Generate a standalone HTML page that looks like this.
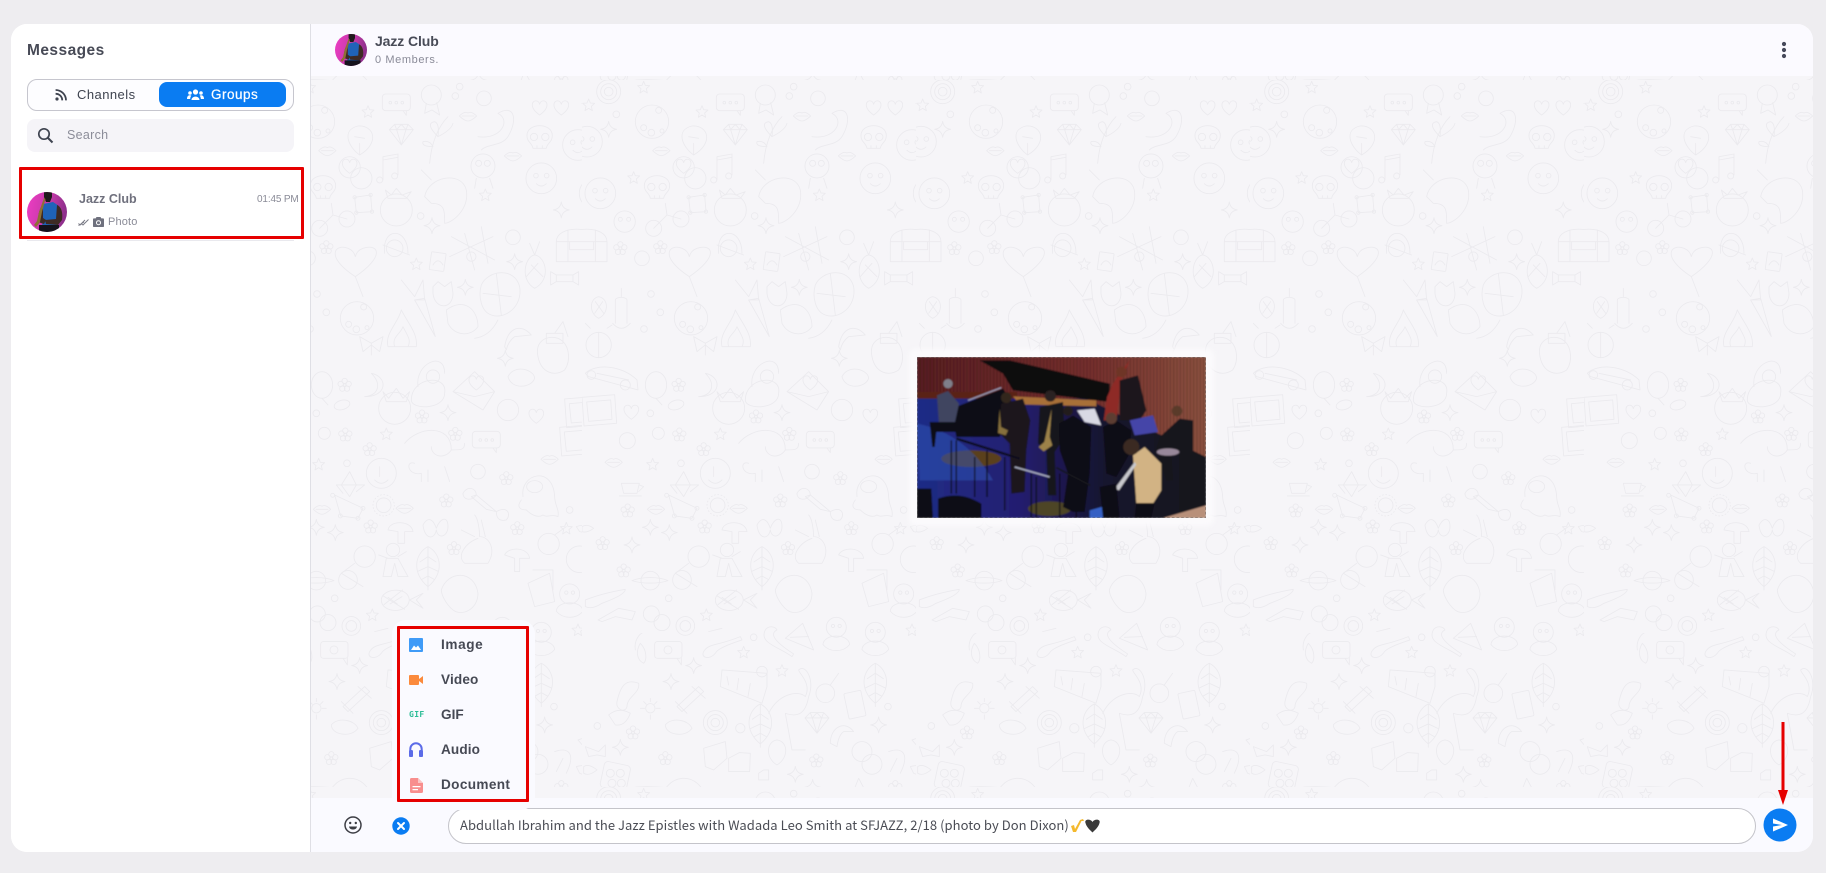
<!DOCTYPE html>
<html lang="en"><head><meta charset="utf-8"><title>Messages</title>
<style>
html,body{margin:0;padding:0;width:1826px;height:873px;overflow:hidden;background:#eeedf0;font-family:"Liberation Sans","Noto Sans CJK JP",sans-serif;color:#3f4450}
.a{position:absolute;white-space:nowrap}
svg{display:block}
.t{line-height:20px;height:20px}
</style></head><body>
<div class="a" style="left:11px;top:24px;width:1802px;height:828px;border-radius:16px;overflow:hidden;background:#fff"></div>
<div class="a" style="left:11px;top:24px;width:299px;height:828px;background:#fff;border-radius:16px 0 0 16px"></div>
<div class="a" style="left:310px;top:24px;width:1px;height:828px;background:#dfdfe5"></div>

<!-- chat wallpaper -->
<div class="a" style="left:311px;top:24px;width:1502px;height:828px;border-radius:0 16px 16px 0;overflow:hidden;background:#f6f5f8">
<svg width="1502" height="828" viewBox="311 24 1502 828" style="position:absolute;left:0;top:0">
<defs>
<g id="s"><path d="M0-18 5-6 18-5 8 4 11 17 0 10-11 17-8 4-18-5-5-6Z"/></g>
<g id="k"><path d="M0-24Q3-3 24 0Q3 3 0 24Q-3 3-24 0Q-3-3 0-24Z"/></g>
<g id="h"><path d="M0 20C-34-4-22-26-8-22Q-2-20 0-12Q2-20 8-22C22-26 34-4 0 20Z"/></g>
<g id="f"><circle cx="0" cy="-12" r="8"/><circle cx="12" cy="-3" r="8"/><circle cx="7" cy="11" r="8"/><circle cx="-7" cy="11" r="8"/><circle cx="-12" cy="-3" r="8"/><circle r="4"/></g>
<g id="l"><path d="M-26 0Q-10-16 0-9Q10-16 26 0Q10 15 0 15Q-10 15-26 0ZM-18 0H18"/></g>
<g id="m"><circle r="50"/><circle cx="-25" cy="18" r="9"/><circle cx="-2" cy="33" r="10"/><circle cx="20" cy="-34" r="9"/><circle cx="30" cy="28" r="6"/></g>
<g id="d"><circle r="36"/><circle r="13"/><circle r="24"/></g>
<g id="b"><rect x="-42" y="-26" width="84" height="50" rx="10"/><circle cx="-18" r="4"/><circle r="4"/><circle cx="18" r="4"/><path d="M20 24 30 38V24"/></g>
<g id="fc"><circle r="46"/><circle cx="-16" cy="-8" r="7"/><circle cx="16" cy="-8" r="7"/><path d="M-15 16Q0 30 15 16"/></g>
<g id="sk"><path d="M-38-8C-38-48 38-48 38-8 38 12 22 14 20 30H-20C-22 14-38 12-38-8Z"/><circle cx="-17" cy="-4" r="11"/><circle cx="17" cy="-4" r="11"/><path d="M-8 30V22M8 30V22"/></g>
<g id="di"><path d="M-36-16-20-32H20L36-16 0 30ZM-36-16H36M-14-16 0 30 14-16M-20-32-14-16 0-32 14-16 20-32"/></g>
<g id="lf"><path d="M0 60C-50 20-40-40 0-60C40-40 50 20 0 60ZM0-60V70M0-30-24-14M0-30 24-14M0 0-30 14M0 0 30 14M0 28-18 38M0 28 18 38"/></g>
<g id="ch"><path d="M-60-10C-60-60 60-60 60-10V50H-60ZM-60-10H60M-20-10V14H20V-10M-25-45V50M25-45V50"/></g>
<g id="st"><path d="M-170 20C-120-8 110 30 170 58 100 50-120 30-170 20Z"/><path d="M-62 62C-62-30 60-50 74 60"/><path d="M-62 40Q10 30 74 50"/></g>
<g id="c"><circle r="22"/></g>
<g id="c2"><circle r="10"/></g>
<g id="o"><path d="M-40 0C-40-34 40-44 44 0 40 44-40 40-40 0ZM-20-8 8 12M-14 12 22-10M-34 -12 30 28M-32 14 24-30"/></g>
<g id="bd"><circle cx="0" cy="-18" r="30"/><path d="M-40 34C-38 0 38 0 40 34 20 58-20 58-40 34Z"/><circle cx="-10" cy="-22" r="5"/><circle cx="10" cy="-22" r="5"/></g>
<g id="fr"><path d="M-50-38 48-46 54 40-44 48Z"/><path d="M-36-24 36-30 40 28-30 34Z"/></g>
</defs>
<pattern id="wp" x="1250" y="80" width="334" height="707" patternUnits="userSpaceOnUse">
<g transform="scale(.3333)" fill="none" stroke="#ebeaee" stroke-width="2.6" stroke-linejoin="round" stroke-linecap="round">
<use href="#d" x="80" y="35"/><use href="#m" x="210" y="125"/><use href="#b" x="445" y="68"/>
<use href="#s" x="185" y="22"/><use href="#s" x="20" y="75"/><use href="#s" x="360" y="95"/><use href="#s" x="1020" y="75"/><use href="#s" x="155" y="293"/><use href="#s" x="712" y="345"/><use href="#s" x="505" y="552"/>
<use href="#k" x="80" y="148"/><use href="#k" x="940" y="390"/><use href="#k" x="552" y="437"/><use href="#k" x="800" y="545"/><use href="#k" x="652" y="622"/><use href="#k" x="772" y="835"/><use href="#k" x="600" y="998"/>
<use href="#c" x="708" y="55"/><use href="#c2" x="635" y="20"/><use href="#c2" x="622" y="48"/><use href="#c2" x="103" y="103"/><use href="#c" x="795" y="472"/><use href="#c" x="180" y="535"/><use href="#c2" x="518" y="408"/><use href="#c2" x="207" y="642"/><use href="#c2" x="186" y="747"/><use href="#c2" x="235" y="697"/><use href="#c2" x="205" y="1000"/>
<circle cx="550" cy="45" r="30"/><path d="M535 70 530 100 552 90 575 105 566 68"/>
<use href="#h" x="875" y="85"/><use href="#h" x="940" y="85"/>
<use href="#fc" x="990" y="195"/><use href="#fc" x="15" y="185"/>
<use href="#sk" x="875" y="175"/><use href="#sk" x="225" y="325"/>
<path d="M335 225C300 200 280 150 330 138 380 135 395 190 335 225ZM335 225V190M320 170 350 175"/>
<use href="#di" x="460" y="165"/>
<path d="M545 250C550 190 570 140 600 110M570 170Q530 130 560 125 575 130 570 170ZM570 170Q610 150 615 130M555 200Q520 200 525 185 545 180 555 200Z"/>
<use href="#l" x="238" y="212"/><use href="#l" x="795" y="228"/><use href="#l" x="660" y="108"/>
<path d="M690 170C760 180 790 120 750 100 800 70 810 120 780 170 760 200 720 190 700 210"/>
<circle cx="705" cy="258" r="36"/><circle cx="692" cy="250" r="9"/><circle cx="718" cy="250" r="9"/><path d="M685 295 680 325M725 295 735 325"/>
<use href="#fc" x="880" y="295"/>
<use href="#fc" x="55" y="340"/><use href="#fc" x="1040" y="340"/>
<circle cx="305" cy="262" r="32"/><circle cx="340" cy="295" r="32"/><use href="#h" x="305" y="260"/><path d="M405 300V230L450 222V285M405 240 450 232"/><circle cx="395" cy="300" r="9"/><circle cx="440" cy="288" r="9"/>
<path d="M520 270 550 300M530 350C540 290 640 270 655 330 665 390 610 430 590 430 590 390 590 370 550 370Z"/>
<circle cx="445" cy="390" r="48"/><path d="M412 330 430 345 445 325 462 345 490 335 475 355H420Z"/>
<path d="M320 352 368 345 372 395 325 398Z"/><circle cx="320" cy="352" r="5"/><circle cx="368" cy="345" r="5"/><circle cx="372" cy="395" r="5"/><circle cx="325" cy="398" r="5"/>
<circle cx="215" cy="445" r="24"/><circle cx="297" cy="417" r="24"/><path d="M215 445 255 405 297 417M255 405 250 370"/>
<circle cx="128" cy="425" r="32"/><circle cx="115" cy="418" r="6"/><circle cx="140" cy="418" r="6"/>
<use href="#ch" x="985" y="495"/><use href="#ch" x="15" y="495"/>
<path d="M610 470 740 540M605 530 735 470M650 460 680 570M700 440 720 550"/><circle cx="670" cy="530" r="14"/>
<path d="M860 625C815 600 830 530 860 525 895 530 910 600 860 625ZM860 525 845 490M860 525 875 485M850 555 885 590M870 550 835 590"/>
<path d="M925 585H975V605H925ZM925 585 908 575V615L925 605M975 585 992 575V615L975 605"/>
<path d="M322 590C230 530 260 490 300 505Q318 512 322 530 326 512 345 505C395 490 410 530 322 590ZM322 590 345 650"/>
<path d="M410 520C400 440 480 440 480 520M405 495 485 525"/><circle cx="440" cy="505" r="25"/>
<rect x="547" y="518" width="44" height="54" rx="3" transform="rotate(8 570 545)"/><path d="M555 555Q570 530 585 555"/>
<use href="#f" x="115" y="505"/><use href="#f" x="235" y="502"/><use href="#f" x="522" y="1010"/><use href="#f" x="290" y="915"/>
<path d="M700 615C720 570 800 560 815 620 825 680 770 720 730 705 700 695 690 650 700 615ZM745 580 760 705M705 640 790 650"/>
<path d="M555 620 570 605 590 620 610 605 615 640C615 690 560 690 555 640ZM595 690C650 650 690 690 690 740 670 770 620 770 600 730ZM680 775C720 770 740 740 750 720"/>
<path d="M460 600 500 650 525 600 530 660 500 660"/><path d="M500 660 530 655 562 770Z"/>
<path d="M100 730V660C100 650 135 650 135 660V730M118 650V625M92 730Q118 760 145 730"/>
<path d="M50 715C20 700 22 655 50 650 80 655 82 700 50 715ZM40 665 65 700M62 665 38 700"/>
<use href="#m" x="327" y="715" transform="translate(0 0)"/>
<path d="M420 800C410 760 450 730 460 690 480 730 510 760 505 800ZM440 800C430 770 460 760 465 740 480 770 490 780 480 800"/>
<path d="M770 800C780 740 820 730 850 765L800 770Q780 785 775 810Z"/>
<circle cx="50" cy="795" r="38"/><path d="M50 757V833M25 745 10 730M75 745 90 735"/>
<path d="M870 830C860 780 900 765 930 775 965 790 970 840 950 870 920 890 880 880 870 830ZM895 760H945V790H895ZM920 760 945 725 960 770"/>
<path d="M370 790 335 770 345 815 370 795 395 815 405 770ZM370 790V825"/>
<path d="M10 880C40 850 120 855 165 900L168 930 20 890ZM45 880 140 900"/><circle cx="130" cy="915" r="15"/><circle cx="28" cy="885" r="13"/>
<ellipse cx="222" cy="915" rx="32" ry="40"/><path d="M222 955 240 975"/><ellipse cx="282" cy="975" rx="24" ry="14" transform="rotate(-15 282 975)"/>
<path d="M370 880C420 890 420 950 350 950 395 945 400 910 370 880Z"/>
<path d="M490 960C490 890 600 880 590 940 590 990 490 990 490 960ZM510 920C500 850 590 810 590 880"/><circle cx="555" cy="890" r="20"/>
<path d="M615 935 680 875 740 935 705 990ZM615 935 680 950 740 935"/><use href="#h" x="685" y="910"/>
<path d="M780 890C800 850 860 870 860 895 850 925 790 930 780 890Z"/>
<circle cx="440" cy="985" r="48"/><path d="M405 935 422 955 445 925 465 955 485 935 475 965H415Z"/>
<use href="#fr" x="50" y="990"/><use href="#fr" x="1000" y="995"/>
<circle cx="780" cy="990" r="32"/><use href="#h" x="148" y="998"/><use href="#h" x="865" y="1010"/>
<!-- lower half -->
<g transform="translate(0 1050)">
<circle cx="136" cy="32" r="24"/><circle cx="229" cy="10" r="18"/><use href="#f" x="292" y="14"/><use href="#s" x="415" y="12"/><use href="#f" x="622" y="12"/>
<use href="#b" x="715" y="30"/><use href="#fr" x="985" y="30"/><use href="#f" x="365" y="58"/>
<path d="M470 40C510 -10 610-20 610 60 640 60 650 60 650 40M500 100C470 90 480 140 520 130V155M540 120V155M590 110 605 155M550 50C550 80 590 90 610 60"/>
<use href="#l" x="95" y="97"/><use href="#s" x="212" y="103"/><circle cx="400" cy="130" r="45"/><path d="M380 150Q400 170 420 150M395 110V140"/>
<path d="M305 200 280 165 305 125 325 165ZM305 165 350 165 325 185M305 165 265 165 285 190"/>
<path d="M118 160H172L165 190H125ZM112 198H178M172 165 185 170 170 185"/>
<use href="#c" x="690" y="125"/><use href="#f" x="775" y="145"/>
<path d="M825 200C815 130 915 105 920 200 920 225 935 240 930 260 910 250 900 265 885 255 870 265 850 255 835 240 815 240 805 230 820 210"/><ellipse cx="860" cy="170" rx="24" ry="18"/>
<path d="M685 195 745 245 715 238 670 200ZM645 190C660 165 685 175 685 195 670 215 645 210 645 190ZM745 245C780 225 790 255 775 270 755 275 745 265 745 245Z"/>
<use href="#f" x="137" y="242"/><use href="#f" x="595" y="212"/><use href="#f" x="368" y="290"/><use href="#f" x="62" y="340"/><use href="#f" x="125" y="422"/><use href="#f" x="618" y="355"/><use href="#f" x="808" y="295"/><use href="#f" x="153" y="908"/><use href="#f" x="250" y="985"/><use href="#f" x="703" y="992"/><use href="#f" x="940" y="1072"/>
<path d="M260 195 345 235 330 265 278 258Z"/><circle cx="254" cy="196" r="6"/><circle cx="345" cy="235" r="6"/><circle cx="277" cy="258" r="6"/><circle cx="330" cy="265" r="6"/>
<circle cx="407" cy="226" r="22"/><circle cx="407" cy="226" r="32" stroke-dasharray="3 7"/><use href="#l" x="222" y="238"/><use href="#l" x="470" y="235"/><use href="#l" x="905" y="88"/>
<use href="#k" x="205" y="292"/><use href="#k" x="262" y="308"/><use href="#k" x="150" y="345"/><use href="#k" x="335" y="707"/><use href="#k" x="267" y="755"/><use href="#k" x="890" y="885"/><use href="#k" x="640" y="1033"/><use href="#k" x="692" y="1072"/><use href="#k" x="115" y="952"/>
<circle cx="902" cy="342" r="32"/><path d="M920 315 955 290"/><use href="#s" x="955" y="295"/>
<path d="M420 300C425 270 490 270 495 305H470V340H450V305ZM770 375C780 350 840 350 845 385H815V425H800V385Z"/>
<path d="M525 285C545 250 560 280 565 295 575 265 600 255 600 290 600 320 570 330 565 300 560 330 530 330 525 285Z"/>
<path d="M640 300 680 320M680 255C690 265 695 300 695 320 725 320 745 360 720 400H650C625 380 650 340 690 325M700 270 712 320"/>
<path d="M420 385 392 375M450 380 475 365M415 385 405 440H430L440 400 450 440H480L450 385Z"/><circle cx="435" cy="360" r="20"/>
<use href="#lf" x="540" y="410"/>
<path d="M150 452C180 440 230 440 258 452 230 462 180 462 150 452Z"/><circle cx="205" cy="452" r="28"/>
<circle cx="350" cy="380" r="32"/><circle cx="300" cy="450" r="28"/><path d="M320 400 280 430 345 470"/>
<circle cx="995" cy="388" r="40"/><path d="M10 510Q60 490 130 478 130 495 60 520 30 540 10 530ZM48 570 110 535 160 545 150 570 100 560 60 575Z"/>
<use href="#o" x="440" y="510"/><path d="M485 510 525 490 505 510 525 535Z"/>
<path d="M580 480C600 420 680 420 690 490 690 540 640 560 615 540 590 520 580 490 580 480Z"/>
<path d="M840 460 905 430 920 515 860 530Z"/><path d="M855 420H915V480"/>
<circle cx="208" cy="552" r="24"/><circle cx="240" cy="578" r="24"/>
<circle cx="310" cy="588" r="28"/><circle cx="310" cy="588" r="16"/><path d="M380 605 420 595"/><use href="#s" x="373" y="555"/>
<path d="M160 660C155 630 175 610 180 610M175 640C195 660 195 690 185 700 165 690 160 665 175 640Z"/>
<rect x="218" y="635" width="82" height="50" rx="8"/><path d="M285 685 298 705V685"/><circle cx="258" cy="660" r="12"/>
<path d="M365 665C380 640 400 650 475 620L480 630C420 650 405 660 400 670 385 690 355 685 365 665Z"/>
<path d="M630 680C590 650 530 640 550 600 560 585 580 590 585 600 565 610 570 630 635 672Z"/>
<path d="M610 625 662 580 695 660ZM625 622 680 620"/>
<use href="#bd" x="763" y="610"/><use href="#bd" x="880" y="625"/>
<use href="#s" x="485" y="667"/><use href="#s" x="600" y="722"/><use href="#s" x="990" y="600"/>
<path d="M420 720 415 770 540 820 555 770 555 730ZM435 740 440 765M470 745 465 780M505 760 498 800"/><circle cx="540" cy="725" r="16"/>
<path d="M560 850C590 790 650 780 670 800 690 760 650 730 650 720 670 700 700 750 680 800 670 860 640 860 610 850L630 960H670"/>
<circle cx="730" cy="790" r="28"/><path d="M745 765 770 730"/>
<rect x="793" y="785" width="52" height="78" rx="4" transform="rotate(-12 820 825)"/>
<use href="#di" x="705" y="880"/><path d="M745 940C745 890 790 870 815 905L785 905Q770 915 765 950Z"/>
<path d="M285 830 350 770 365 785 300 845ZM280 815 315 850M330 770 370 805"/><path d="M105 815C115 770 130 745 170 760 175 790 135 800 135 830 130 850 100 840 105 815Z"/>
<circle cx="205" cy="835" r="14"/><path d="M205 805V815M205 855V868M175 835H188M222 835H235M185 815 193 823M225 815 217 823"/>
<use href="#d" x="400" y="878"/><path d="M80 855Q110 830 145 850 130 890 100 885ZM250 885C270 860 320 870 330 895 310 925 250 915 250 885Z"/>
<use href="#lf" x="535" y="882"/><use href="#lf" x="880" y="760"/><circle cx="475" cy="895" r="14"/>
<path d="M585 1005C550 985 552 935 585 930 620 935 620 985 585 1005Z"/><path d="M472 968 505 970 503 1025H440V985Z"/>
<circle cx="840" cy="965" r="30"/><circle cx="870" cy="1003" r="30"/><path d="M920 965C960 950 985 970 955 1030M945 985 925 1025"/>
<path d="M365 955 430 935 435 985 395 1020 370 1010Z"/>
<rect x="60" y="1000" width="80" height="80" rx="12" transform="rotate(12 100 1040)"/><circle cx="85" cy="1030" r="12"/><circle cx="115" cy="1030" r="12"/><circle cx="90" cy="1060" r="12"/><circle cx="118" cy="1060" r="12"/>
<use href="#st" x="300" y="1060"/>
<path d="M545 1020H560V1050H530V1030Z"/><path d="M550 1095V1085C555 1070 590 1070 592 1090V1100"/>
<path d="M830 1045 846 1075 880 1080 855 1100H805L785 1078 818 1075Z"/>
<path d="M5 1010Q20 1000 45 1020 20 1040 5 1030ZM985 1010Q1015 1000 1040 1020 1015 1040 995 1030ZM985 290Q1015 280 1035 295 1015 310 995 305ZM0 290Q15 280 35 295 15 310 0 305Z"/>
<use href="#bd" x="965" y="510"/><path d="M10 950 50 965 70 945 70 980 45 975 20 980ZM990 930 1020 920 1050 945 1020 965Z"/>
<use href="#c2" x="965" y="240"/><use href="#c2" x="260" y="505"/><use href="#c2" x="515" y="622"/><use href="#c2" x="46" y="888"/><use href="#c2" x="918" y="830"/><use href="#c2" x="297" y="100"/>
</g>
</g>
</pattern>
<rect x="311" y="76" width="1502" height="722" fill="url(#wp)"/>
</svg>
</div>

<!-- header -->
<div class="a" style="left:311px;top:24px;width:1502px;height:52px;background:#fbfaff;border-radius:0 16px 0 0"></div>
<svg class="a" width="32" height="32" viewBox="0 0 40 40" style="left:335px;top:34px"><use href="#av"/></svg>
<div class="a t" style="left:375px;top:31px;font-size:14px;font-weight:700;color:#484b57;letter-spacing:-.1px">Jazz Club</div>
<div class="a t" style="left:375px;top:50px;font-size:11px;color:#8a8b98;letter-spacing:.6px">0 Members.</div>
<svg class="a" width="8" height="20" style="left:1780px;top:40px"><g fill="#46495a"><circle cx="4" cy="4" r="2.1"/><circle cx="4" cy="10" r="2.1"/><circle cx="4" cy="16" r="2.1"/></g></svg>

<!-- sidebar -->
<div class="a t" style="left:27px;top:41px;font-size:15.5px;font-weight:700;color:#474a56;letter-spacing:.45px">Messages</div>
<div class="a" style="left:27px;top:79px;width:265px;height:30px;border:1px solid #c6c6ce;border-radius:10px;background:#fdfdff"></div>
<div class="a" style="left:159px;top:82px;width:127px;height:25px;background:#0a7cf2;border-radius:8px"></div>
<svg class="a" width="12" height="12" viewBox="0 0 12 12" style="left:55px;top:89px"><circle cx="2" cy="10" r="1.6" fill="#3f4450"/><path d="M.6 4.8A6.4 6.4 0 0 1 7.2 11.4M.6 1A10.4 10.4 0 0 1 11 11.4" fill="none" stroke="#3f4450" stroke-width="1.8"/></svg>
<div class="a t" style="left:77px;top:85px;font-size:13px;color:#3f4450;letter-spacing:.45px">Channels</div>
<svg class="a" width="17" height="12" viewBox="0 0 17 12" style="left:187px;top:89px" fill="#fff"><circle cx="8.5" cy="3" r="2.6"/><circle cx="3" cy="4" r="1.8"/><circle cx="14" cy="4" r="1.8"/><path d="M4.5 11C4.5 6.5 12.5 6.5 12.5 11ZM0 10C0 6 3 6 4.3 6.6 3.4 7.6 3.2 9 3.2 10ZM17 10C17 6 14 6 12.7 6.6 13.6 7.6 13.8 9 13.8 10Z"/></svg>
<div class="a t" style="left:211px;top:85px;font-size:13.5px;color:#fff;letter-spacing:.5px;-webkit-text-stroke:.2px #fff">Groups</div>
<div class="a" style="left:27px;top:119px;width:267px;height:33px;background:#f5f4f8;border-radius:8px"></div>
<svg class="a" width="18" height="18" style="left:37px;top:127px"><circle cx="7" cy="7" r="5.2" fill="none" stroke="#3f4450" stroke-width="1.7"/><path d="M11 11 15.5 15.5" stroke="#3f4450" stroke-width="2"/></svg>
<div class="a t" style="left:67px;top:125px;font-size:12.5px;color:#8c8d99;letter-spacing:.3px">Search</div>

<div class="a" style="left:27px;top:240px;width:267px;height:1px;background:#e9e9ee"></div>
<svg class="a" width="40" height="40" viewBox="0 0 40 40" style="left:27px;top:192px"><defs><g id="av"><clipPath id="avc"><circle cx="20" cy="20" r="20"/></clipPath><linearGradient id="avg" x1="0" y1="0" x2="1" y2=".2"><stop offset="0" stop-color="#ee3cc4"/><stop offset=".6" stop-color="#c43aa8"/><stop offset="1" stop-color="#8f2f8c"/></linearGradient><g clip-path="url(#avc)"><rect width="40" height="40" fill="url(#avg)"/><path d="M16 12 26 10 32 14 32 28 29 35H15L16 24Z" fill="#1f63b8"/><path d="M17-1H25V5L23 10H19L17 5Z" fill="#201a1c"/><path d="M30 13C35 15 36 22 35 28L31 33 19 32 18 28 29 27Z" fill="#3d2a24"/><path d="M16 12C12 17 11 24 11 30L17 32 19 28 16 26Z" fill="#3d2a24"/><path d="M17 6 18.5 7 15 20 13 30 9 35 7 33 10 29 12 20Z" fill="#8d7034"/><path d="M12 33H32V40H12Z" fill="#15131c"/></g></g></defs><use href="#av"/></svg>
<div class="a t" style="left:79px;top:189px;font-size:12.5px;font-weight:700;color:#6f707d;letter-spacing:0">Jazz Club</div>
<div class="a t" style="left:257px;top:190px;font-size:10px;color:#8a8b97;letter-spacing:-.15px">01:45 PM</div>
<svg class="a" width="11" height="8" style="left:78px;top:218px"><path d="M.5 5.5 2 7 7 2M3.5 6 5 7 10.5 1.5M.5 7.5 6 4" fill="none" stroke="#777884" stroke-width="1"/></svg>
<svg class="a" width="11" height="10" viewBox="0 0 11 10" style="left:93px;top:217px"><path d="M3.5 0H7.5L8.3 1.4H10.2A.8.8 0 0 1 11 2.2V9.2A.8.8 0 0 1 10.2 10H.8A.8.8 0 0 1 0 9.2V2.2A.8.8 0 0 1 .8 1.4H2.7Z" fill="#6f717e"/><circle cx="5.5" cy="5.7" r="2" fill="none" stroke="#fff" stroke-width="1"/></svg>
<div class="a t" style="left:108px;top:212px;font-size:11px;color:#8a8b97;letter-spacing:.15px">Photo</div>
<div class="a" style="left:19px;top:167px;width:279px;height:66px;border:3px solid #e60000;border-radius:1px"></div>

<!-- center image -->
<div class="a" style="left:909px;top:349px;width:305px;height:177px;background:#fbfafc;border-radius:6px;filter:blur(3px)"></div>
<svg class="a" width="289" height="161" viewBox="52 50 867 483" preserveAspectRatio="none" style="left:917px;top:357px">
<defs><linearGradient id="fl" x1="0" y1="0" x2="1" y2="0"><stop offset="0" stop-color="#1e2c86"/><stop offset=".35" stop-color="#241e70"/><stop offset=".65" stop-color="#15122e"/><stop offset="1" stop-color="#17121a"/></linearGradient>
<linearGradient id="wl" x1="0" y1="0" x2="1" y2="0"><stop offset="0" stop-color="#5a1e22"/><stop offset=".6" stop-color="#78302e"/><stop offset="1" stop-color="#8e5240"/></linearGradient>
<pattern id="ws" width="10" height="20" patternUnits="userSpaceOnUse"><rect width="4" height="20" fill="#000" opacity=".2"/></pattern><filter id="bl"><feGaussianBlur stdDeviation="2.6"/></filter></defs>
<g filter="url(#bl)">
<rect x="52" y="50" width="867" height="483" fill="url(#wl)"/><rect x="52" y="50" width="867" height="300" fill="url(#ws)"/>
<rect x="52" y="155" width="300" height="30" fill="#5a2018"/>
<path d="M52 175H560L919 350V533H52Z" fill="url(#fl)"/>
<ellipse cx="215" cy="355" rx="90" ry="25" fill="#5a3f1e"/><ellipse cx="450" cy="505" rx="65" ry="22" fill="#4e4428"/>
<path d="M52 250Q200 280 280 420L60 420Z" fill="#2f55b8" opacity=".5"/>
<path d="M570 510 640 490 640 533H570ZM860 522 919 510V533H860Z" fill="#3560c4"/>
<path d="M790 533 919 495V533Z" fill="#b8907a"/>
<path d="M240 60H330L630 130V185L340 150 310 100Z" fill="#0c0a10"/>
<path d="M340 168 590 180 590 198 360 192Z" fill="#a87038"/>
<path d="M155 205 310 145 340 190 300 290H170Z" fill="#0d0c14"/>
<path d="M205 180 305 142" stroke="#9a9db8" stroke-width="4"/>
<path d="M112 165 145 152 178 190 165 250H118Z" fill="#3f4560"/><circle cx="145" cy="130" r="14" fill="#7f7f8a"/>
<path d="M90 245H170V275H110L105 320H98Z" fill="#0c0b12"/>
<path d="M305 190 370 175 392 240 380 330 375 455 335 460 330 310 300 280Z" fill="#1a171b"/><circle cx="320" cy="172" r="16" fill="#33261f"/>
<path d="M300 205 304 260 325 270 318 285 295 278Z" fill="#86703c"/>
<path d="M420 200 490 185 495 290 465 335 470 465 445 465 440 330 415 310Z" fill="#14131a"/><circle cx="452" cy="167" r="17" fill="#2c2220"/>
<path d="M456 205 450 290 458 315 432 333 417 320 434 305Z" fill="#9c824a"/>
<path d="M478 250 520 225 575 260 570 400 555 515 520 515 490 500 505 400 480 330Z" fill="#0f0e13"/><circle cx="505" cy="212" r="15" fill="#241b1a"/>
<path d="M532 210 585 205 605 255 555 245Z" fill="#d8d9e4"/>
<path d="M640 130 660 100 690 60 665 120 650 240H612L622 170Z" fill="#8e2c28"/>
<path d="M660 120 715 105 740 210 720 240H660Z" fill="#1a181c"/><circle cx="665" cy="95" r="16" fill="#6e3626"/>
<path d="M610 260 650 240 695 270 690 340 650 410 620 400Z" fill="#111017"/><circle cx="635" cy="234" r="17" fill="#5c3c32"/>
<path d="M690 240 760 225 775 275 705 285Z" fill="#4445a8"/>
<path d="M780 290 840 235 880 240 880 330 815 345 820 420H800L770 325Z" fill="#15141a"/><circle cx="832" cy="212" r="16" fill="#5a3a2c"/>
<ellipse cx="805" cy="335" rx="34" ry="11" fill="#98889a"/>
<path d="M700 345 735 320 785 370 785 450 760 490H710Z" fill="#d2b384"/><circle cx="695" cy="320" r="24" fill="#3a2a20"/>
<path d="M710 488H765L755 533H705Z" fill="#0e0d13"/>
<path d="M645 445 705 365 710 373 658 450Z" fill="#c8c8cc"/><path d="M600 440 650 430 660 533H610Z" fill="#100f16"/>
<path d="M170 295 360 355" stroke="#10101c" stroke-width="7"/><path d="M345 380 450 410" stroke="#a8acc0" stroke-width="5"/><path d="M470 382 572 435" stroke="#14141e" stroke-width="5"/>
<path d="M155 300V460M170 300V460M225 350V470M262 330V470M315 350V510M395 400V533M410 410V533M480 400V533M530 430V533" stroke="#0a0a14" stroke-width="4"/>
<path d="M52 445H95L100 533H52ZM115 475Q180 450 245 490V533H115Z" fill="#0a0a14"/>
<path d="M860 420 919 430V490H870Z" fill="#16141c"/>
</g>
<rect x="52.5" y="50.5" width="866" height="482" fill="none" stroke="#333" stroke-width="3" stroke-dasharray="8 6" opacity=".5"/>
</svg>

<!-- composer -->
<div class="a" style="left:311px;top:798px;width:1502px;height:54px;background:#fafaff;border-radius:0 0 16px 0"></div>
<div class="a" style="left:448px;top:808px;width:1306px;height:34px;background:#fff;border:1px solid #c4c4ca;border-radius:18px"></div>
<div class="a t" style="left:460px;top:815px;font-family:'Noto Sans CJK JP','Liberation Sans',sans-serif;font-size:13px;color:#4a4c54;letter-spacing:.05px">Abdullah Ibrahim and the Jazz Epistles with Wadada Leo Smith at SFJAZZ, 2/18 (photo by Don Dixon)</div>
<svg class="a" width="32" height="16" viewBox="0 0 32 16" style="left:1069px;top:817px"><path d="M2 9 5 8 6 12 11 3 14 2 15 4 12.5 4 7 15H4Z" fill="#f4b92e"/><path d="M16.500 6C15 2 21.500 1.500 23.500 5 25.500 1.500 32 2 30.500 6 29.500 10 26 13 23.500 15.500 21 13 17.500 10 16.500 6Z" fill="#3a3a3a"/></svg>
<svg class="a" width="20" height="20" viewBox="0 0 20 20" style="left:343px;top:815px"><circle cx="10" cy="10" r="8" fill="none" stroke="#3c3d44" stroke-width="1.5"/><circle cx="7.2" cy="8" r="1.2" fill="#3c3d44"/><circle cx="12.8" cy="8" r="1.2" fill="#3c3d44"/><path d="M6 11.500H14C13.500 13.800 12 14.500 10 14.500S6.500 13.800 6 11.500Z" fill="#3c3d44"/></svg>
<svg class="a" width="18" height="18" viewBox="0 0 18 18" style="left:392px;top:817px"><circle cx="9" cy="9" r="8.700" fill="#0a7cf2"/><path d="M6 6 12 12M12 6 6 12" stroke="#fff" stroke-width="2" stroke-linecap="round"/></svg>
<svg class="a" width="34" height="34" viewBox="0 0 34 34" style="left:1763px;top:808px"><circle cx="17" cy="17" r="16.500" fill="#0a7cf2"/><path d="M10 10.500 25 17 10 23.500V18.500L19 17 10 15.500Z" fill="#fff"/></svg>

<!-- attach menu -->
<div class="a" style="left:392px;top:620px;width:143px;height:190px;background:#fafaff;border-radius:14px"></div>
<div class="a" style="left:397px;top:626px;width:126px;height:170px;border:3px solid #e60000;border-radius:1px"></div>
<svg class="a" width="14" height="14" viewBox="0 0 14 14" style="left:409px;top:638px"><rect width="14" height="14" rx="1" fill="#3f9bf7"/><path d="M2 12 5 7.500 7 9.500 9 7.500 12 12Z" fill="#fff"/></svg>
<svg class="a" width="14" height="10" viewBox="0 0 14 10" style="left:409px;top:675px"><rect width="10" height="10" rx="1" fill="#fb8a3c"/><path d="M10 4 14 1V9L10 6Z" fill="#fb8a3c"/></svg>
<div class="a" style="left:409px;top:709px;font:700 8px/12px 'DejaVu Sans Mono','Liberation Mono',monospace;color:#2cbd97;letter-spacing:.4px">GIF</div>
<svg class="a" width="14" height="15" viewBox="0 0 14 15" style="left:409px;top:742px"><path d="M1.300 9V7A5.700 5.700 0 0 1 12.700 7V9" fill="none" stroke="#5b6be8" stroke-width="2"/><rect x="0" y="8" width="4" height="7" rx="1.300" fill="#5b6be8"/><rect x="10" y="8" width="4" height="7" rx="1.300" fill="#5b6be8"/></svg>
<svg class="a" width="13" height="15" viewBox="0 0 13 15" style="left:410px;top:778px"><path d="M1.500 0H8L13 5V13.500A1.500 1.500 0 0 1 11.500 15H1.500A1.500 1.500 0 0 1 0 13.500V1.500A1.500 1.500 0 0 1 1.500 0Z" fill="#f88e8e"/><path d="M8 0 13 5H8Z" fill="#fbc4c4"/><path d="M2.500 8H10.500V9.300H2.500ZM2.500 11H8V12.300H2.500Z" fill="#fff"/></svg>
<div class="a t" style="left:441px;top:635px;font-size:13.6px;font-weight:700;color:#464954;letter-spacing:.6px">Image</div>
<div class="a t" style="left:441px;top:670px;font-size:13.6px;font-weight:700;color:#464954;letter-spacing:.15px">Video</div>
<div class="a t" style="left:441px;top:705px;font-size:13.6px;font-weight:700;color:#464954;letter-spacing:0">GIF</div>
<div class="a t" style="left:441px;top:740px;font-size:13.6px;font-weight:700;color:#464954;letter-spacing:.1px">Audio</div>
<div class="a t" style="left:441px;top:775px;font-size:13.6px;font-weight:700;color:#464954;letter-spacing:.35px">Document</div>

<!-- red arrow -->
<svg class="a" width="12" height="86" viewBox="0 0 12 86" style="left:1777px;top:720px"><path d="M6 2V74" stroke="#e60000" stroke-width="3"/><path d="M1 70H11L6 85Z" fill="#e60000"/></svg>
</body></html>
